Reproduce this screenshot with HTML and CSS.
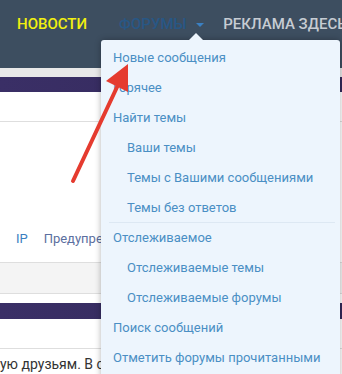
FILE: index.html
```html
<!DOCTYPE html>
<html lang="ru">
<head>
  <meta charset="UTF-8">
  <meta name="viewport" content="width=device-width, initial-scale=1.0">
  <title>Форумы</title>
  <link rel="stylesheet" href="styles.css">
</head>
<body>
  <header class="topbar">
    <nav class="nav">
      <a class="nav-link nav-news" href="#">Новости</a>
      <a class="nav-link nav-forums" href="#">Форумы <span class="caret"></span></a>
      <a class="nav-link nav-ads" href="#">Реклама здесь</a>
    </nav>
  </header>

  <div class="page">
    <div class="strip"></div>
    <div class="bar"></div>
    <div class="block"></div>
    <div class="tabs">
      <span class="tab tab-cut">›</span>
      <span class="tab">IP</span>
      <span class="tab tab-muted">Предупреждения</span>
    </div>
    <div class="band"></div>
    <div class="gap"></div>
    <div class="bar bar-thick"></div>
    <div class="block"></div>
    <p class="text">ую друзьям. В случае вопросов</p>
  </div>

  <!-- dropdown menu of "Форумы" -->
  <div class="menu">
    <ul class="menu-list">
      <li><a href="#">Новые сообщения</a></li>
      <li><a href="#">Горячее</a></li>
      <li><a href="#">Найти темы</a></li>
      <li class="sub"><a href="#">Ваши темы</a></li>
      <li class="sub"><a href="#">Темы с Вашими сообщениями</a></li>
      <li class="sub sep"><a href="#">Темы без ответов</a></li>
      <li><a href="#">Отслеживаемое</a></li>
      <li class="sub"><a href="#">Отслеживаемые темы</a></li>
      <li class="sub"><a href="#">Отслеживаемые форумы</a></li>
      <li><a href="#">Поиск сообщений</a></li>
      <li><a href="#">Отметить форумы прочитанными</a></li>
    </ul>
  </div>

  <svg class="pointer" width="342" height="374" viewBox="0 0 342 374">
    <line x1="73" y1="181" x2="118" y2="85" stroke="#e53b2f" stroke-width="4" stroke-linecap="round"/>
    <polygon points="128,64 106,81 128,92" fill="#e53b2f"/>
  </svg>
</body>
</html>
```

FILE: styles.css
```css
/* Dark header, light blue dropdown */
body {
  margin: 0;
  background-color: #fff;
  font-family: Roboto, "Liberation Sans", sans-serif;
  overflow: hidden;
}

a {
  text-decoration: none;
}

.topbar {
  height: 68px;
  background-color: #3d4e60;
}

.nav {
  display: flex;
  align-items: center;
  height: 48px;
  padding-left: 17px;
  white-space: nowrap;
}

.nav-link {
  font-size: 15px;
  font-weight: 500;
  text-transform: uppercase;
  margin-right: 32px;
}

.nav-news {
  color: #f2f00f;
}

.nav-forums {
  color: #285785;
  margin-right: 19px;
}

.nav-ads {
  color: #c6ccd3;
}

.caret {
  display: inline-block;
  margin-left: 6px;
  vertical-align: middle;
  border-left: 4px solid transparent;
  border-right: 4px solid transparent;
  border-top: 4px solid #3b80c2;
}

.page {
  display: flex;
  flex-direction: column;
}

.strip {
  height: 9px;
  background-color: #e8e8e8;
}

.bar {
  height: 15px;
  background: linear-gradient(90deg, #3a2f66, #33295a);
}

.bar-thick {
  height: 16px;
}

.block {
  height: 29px;
  border-bottom: 1px solid #dedede;
}

.tabs {
  height: 141px;
  display: flex;
  align-items: flex-end;
  gap: 16px;
  padding-bottom: 16px;
  box-sizing: border-box;
  border-bottom: 1px solid #dedede;
  font-size: 13px;
  color: #3b7fc1;
  white-space: nowrap;
}

.tab-cut {
  margin-left: -4px;
}

.tab-muted {
  color: #5b6fa0;
}

.band {
  height: 30px;
  background-color: #f4f4f4;
  border-bottom: 1px solid #dedede;
}

.gap {
  height: 9px;
}

.text {
  margin: 7px 0 0;
  font-size: 14px;
  color: #333;
  white-space: nowrap;
}

.menu {
  position: absolute;
  left: 101px;
  top: 40px;
  width: 239px;
  height: 340px;
  background-color: #edf5fd;
  border-radius: 3px;
  box-shadow: 0 0 6px rgba(0, 0, 0, 0.3);
}

.menu::before {
  content: "";
  position: absolute;
  left: 88px;
  top: -7px;
  border-left: 7px solid transparent;
  border-right: 7px solid transparent;
  border-bottom: 7px solid #edf5fd;
}

.menu-list {
  list-style: none;
  margin: 0;
  padding: 3px 0 0;
}

.menu-list li {
  height: 30px;
  line-height: 30px;
  padding-left: 12px;
  font-size: 13px;
}

.menu-list li.sub {
  padding-left: 26px;
}

.menu-list li.sep {
  height: 29px;
  border-bottom: 1px solid #dde8f3;
  margin: 0 5px 0 8px;
  padding-left: 18px;
}

.menu-list a {
  color: #4a8fc4;
}

.pointer {
  position: absolute;
  left: 0;
  top: 0;
}
```
